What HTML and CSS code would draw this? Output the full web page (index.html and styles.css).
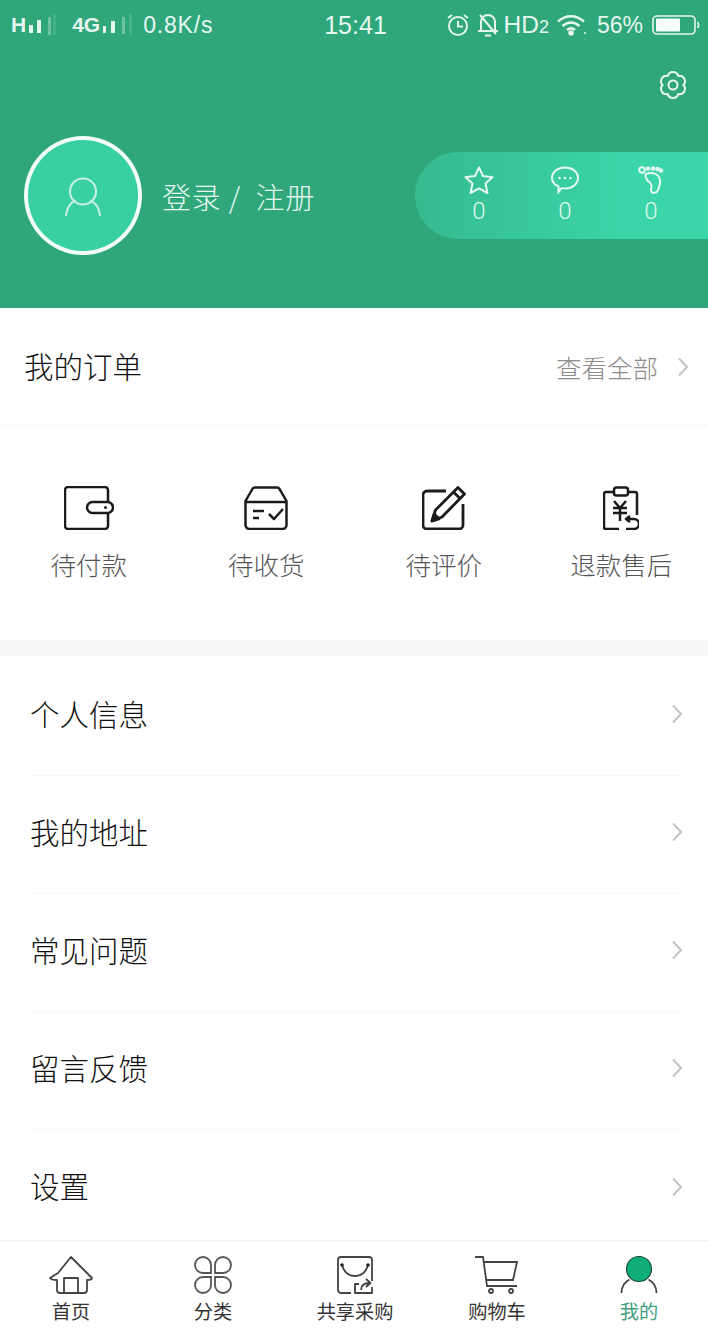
FILE: index.html
```html
<!DOCTYPE html>
<html lang="zh-CN">
<head>
    <meta charset="UTF-8">
    <meta name="viewport" content="width=device-width, initial-scale=1.0">
    <title>我的</title>
    <link rel="stylesheet" href="styles.css">
</head>
<body>
    <div class="page">
        <header class="top">
            <div class="status-bar">
                <div class="status-left">
                    <span class="net">H</span>
                    <svg class="signal" width="44" height="22" viewBox="0 0 44 22"><rect x="1" y="11" width="4" height="8" fill="#e6f7f0"/><rect x="9" y="6" width="4" height="13" fill="#e6f7f0"/><rect x="20" y="3" width="3" height="18" fill="#6cc2a2"/><rect x="25" y="0" width="3" height="21" fill="#53b792" opacity=".6"/></svg>
                    <span class="net">4G</span>
                    <svg class="signal" width="34" height="22" viewBox="0 0 34 22"><rect x="1" y="12" width="3" height="7" fill="#e6f7f0"/><rect x="9" y="7" width="4" height="12" fill="#e6f7f0"/><rect x="20" y="3" width="3" height="17" fill="#6cc2a2"/><rect x="27" y="0" width="3" height="21" fill="#53b792" opacity=".6"/></svg>
                    <span class="speed">0.8K/s</span>
                </div>
                <div class="clock">15:41</div>
                <div class="status-right">
                    <svg width="24" height="24" viewBox="0 0 24 24" fill="none" stroke="#e6f7f0" stroke-width="2"><circle cx="12" cy="13" r="9"/><path d="M12 8v5.500h5M2 5l4-3M22 5l-4-3"/></svg>
                    <svg class="bell" width="22" height="24" viewBox="0 0 22 24" fill="none" stroke="#e6f7f0" stroke-width="2"><path d="M4 18V9a7 7 0 0 1 14 0v9M1 18h20M8 22.500h6M3 2l16 19"/></svg>
                    <span class="hd">HD<small>2</small></span>
                    <svg class="wifi" width="32" height="22" viewBox="0 0 32 22" fill="none" stroke="#e6f7f0" stroke-width="2.500"><path d="M2 7.500c8-7 18-7 26 0M6.500 12c5.500-4.500 11.500-4.500 17 0M11 16c2.500-2 5.500-2 8 0"/><circle cx="15" cy="19" r="1.500" fill="#e6f7f0"/><circle cx="29" cy="19" r="1" fill="#e6f7f0" stroke="none"/></svg>
                    <span class="pct">56%</span>
                    <svg class="battery" width="48" height="22" viewBox="0 0 48 22" fill="none"><rect x="1" y="2" width="42" height="18" rx="4" stroke="#e6f7f0" stroke-width="1.600"/><rect x="4" y="4.500" width="24" height="13" rx="1" fill="#f6fdfa"/><path d="M45.500 8c1.500 2 1.500 4 0 6" stroke="#e6f7f0" stroke-width="1.600"/></svg>
                </div>
            </div>
            <div class="settings-row">
                <svg width="30" height="30" viewBox="0 0 30 30" fill="none" stroke="#e6f7f0" stroke-width="2"><path d="M25.500 15A5.500 5.500 0 0 1 20.250 24.090A5.500 5.500 0 0 1 9.750 24.090A5.500 5.500 0 0 1 4.500 15A5.500 5.500 0 0 1 9.750 5.910A5.500 5.500 0 0 1 20.250 5.910A5.500 5.500 0 0 1 25.500 15Z"/><circle cx="15" cy="15" r="4.500"/></svg>
            </div>
            <div class="profile">
                <div class="avatar">
                    <svg width="36" height="40" viewBox="0 0 36 40" fill="none" stroke="#c2f0df" stroke-width="2.200" stroke-linecap="round"><circle cx="18" cy="14.500" r="13"/><path d="M1 38c1-7 4-12 9-14M35 38c-1-7-4-12-9-14"/></svg>
                </div>
                <div class="login">登录 /&nbsp; 注册</div>
                <div class="stats">
                    <div class="stat">
                        <svg width="30" height="28" viewBox="0 0 30 28" fill="none" stroke="#e6f9f2" stroke-width="2" stroke-linejoin="round"><path d="M15 1.500l4 8.500 9.500 1.200-7 6.300 2 9.500-8.500-4.700-8.500 4.700 2-9.500-7-6.300 9.500-1.200z"/></svg>
                        <span>0</span>
                    </div>
                    <div class="stat">
                        <svg width="28" height="28" viewBox="0 0 28 28" fill="none" stroke="#e6f9f2" stroke-width="2"><path d="M14 1.500c7.300 0 13 4.700 13 10.500s-5.700 10.500-13 10.500c-1.200 0-2.300-.1-3.400-.4L7.500 26v-5.500C3.500 18.700 1 15.600 1 12 1 6.200 6.700 1.500 14 1.500z"/><circle cx="8.500" cy="12" r="1.300" fill="#e6f9f2" stroke="none"/><circle cx="14" cy="12" r="1.300" fill="#e6f9f2" stroke="none"/><circle cx="19.500" cy="12" r="1.300" fill="#e6f9f2" stroke="none"/></svg>
                        <span>0</span>
                    </div>
                    <div class="stat">
                        <svg width="26" height="28" viewBox="0 0 26 28" fill="none" stroke="#e6f9f2" stroke-width="2"><circle cx="4" cy="4" r="2.800"/><circle cx="10" cy="2.500" r="1.300"/><circle cx="15" cy="2.500" r="1.300"/><circle cx="19.500" cy="3" r="1.300"/><circle cx="23" cy="4.500" r="1.300"/><path d="M8 8c5-2 13-1 14 6 .6 4-1 7-2 10-1 3-6 4-7 1-.6-2 1-3 .5-5.500C13 16 10 16 8.500 13 7.500 11 7 9 8 8z"/></svg>
                        <span>0</span>
                    </div>
                </div>
            </div>
        </header>

        <section class="orders">
            <div class="orders-head">
                <span class="orders-title">我的订单</span>
                <span class="orders-all">查看全部</span>
                <svg class="chevron" width="10" height="20" viewBox="0 0 10 20" fill="none" stroke="#c4c4c4" stroke-width="2"><path d="M1 1.500l8 8.500-8 8.500"/></svg>
            </div>
            <div class="orders-grid">
                <div class="order-item">
                    <svg width="50" height="44" viewBox="0 0 50 44" fill="none" stroke="#1b1b1b" stroke-width="2.500" stroke-linejoin="round"><path d="M44 15V4a3 3 0 0 0-3-3H4a3 3 0 0 0-3 3v36a3 3 0 0 0 3 3h37a3 3 0 0 0 3-3V28"/><rect x="23" y="16" width="26" height="11" rx="5.500"/><circle cx="41.500" cy="21.500" r="1.500" fill="#1b1b1b" stroke="none"/></svg>
                    <span>待付款</span>
                </div>
                <div class="order-item">
                    <svg width="44" height="44" viewBox="0 0 44 44" fill="none" stroke="#1b1b1b" stroke-width="2.500" stroke-linejoin="round"><path d="M11 1.500h22a3 3 0 0 1 2.600 1.500L42.500 15v24a4 4 0 0 1-4 4h-33a4 4 0 0 1-4-4V15L8.400 3A3 3 0 0 1 11 1.500zM1.500 16h41"/><path d="M9 25h11M9 32h6M25 28l5 5 9-10"/></svg>
                    <span>待收货</span>
                </div>
                <div class="order-item">
                    <svg width="44" height="44" viewBox="0 0 44 44" fill="none" stroke="#1b1b1b" stroke-width="2.800" stroke-linejoin="round"><path d="M24 5H5a4 4 0 0 0-4 4v30a4 4 0 0 0 4 4h32a4 4 0 0 0 4-4V18"/><path d="M10 35l3.500-11L36 1.500l6.500 6.500L20 31z"/><path d="M31.500 6l6.500 6.500"/><path d="M10 35l7-2.200-4.800-4.800z" fill="#1b1b1b"/></svg>
                    <span>待评价</span>
                </div>
                <div class="order-item">
                    <svg width="36" height="44" viewBox="0 0 36 44" fill="none" stroke="#1b1b1b" stroke-width="2.500" stroke-linejoin="round"><path d="M10 6H3a2 2 0 0 0-2 2v33a2 2 0 0 0 2 2h13M26 6h6a2 2 0 0 1 2 2v21"/><rect x="11" y="1.500" width="14" height="8" rx="2.500"/><path d="M11 15l6 7 6-7M10 22h14M10 27h14M17 22v13"/><path d="M27 30l-4 3 4 3M23 33h8a4 4 0 0 1 0 10h-8"/></svg>
                    <span>退款售后</span>
                </div>
            </div>
        </section>

        <div class="band"></div>

        <ul class="menu">
            <li>个人信息<svg width="10" height="20" viewBox="0 0 10 20" fill="none" stroke="#c4c4c4" stroke-width="2"><path d="M1 1.500l8 8.500-8 8.500"/></svg></li>
            <li>我的地址<svg width="10" height="20" viewBox="0 0 10 20" fill="none" stroke="#c4c4c4" stroke-width="2"><path d="M1 1.500l8 8.500-8 8.500"/></svg></li>
            <li>常见问题<svg width="10" height="20" viewBox="0 0 10 20" fill="none" stroke="#c4c4c4" stroke-width="2"><path d="M1 1.500l8 8.500-8 8.500"/></svg></li>
            <li>留言反馈<svg width="10" height="20" viewBox="0 0 10 20" fill="none" stroke="#c4c4c4" stroke-width="2"><path d="M1 1.500l8 8.500-8 8.500"/></svg></li>
            <li>设置<svg width="10" height="20" viewBox="0 0 10 20" fill="none" stroke="#c4c4c4" stroke-width="2"><path d="M1 1.500l8 8.500-8 8.500"/></svg></li>
        </ul>

        <nav class="tabs">
            <div class="tab">
                <svg width="44" height="38" viewBox="0 0 44 38" fill="none" stroke="#444" stroke-width="1.800" stroke-linejoin="round"><path d="M9 17L22 1l14 14 7 7c0 1.500-2 2-5 2v10a3 3 0 0 1-3 3H11a3 3 0 0 1-3-3V24c-3 0-6-.5-7-2z"/><path d="M15 37V22h14v15"/></svg>
                <span>首页</span>
            </div>
            <div class="tab">
                <svg width="38" height="38" viewBox="0 0 38 38" fill="none" stroke="#555" stroke-width="1.800"><path d="M17 17H9a8 8 0 1 1 8-8z"/><path d="M21 17h8a8 8 0 1 0-8-8z"/><path d="M17 21H9a8 8 0 1 0 8 8z"/><path d="M21 21h8a8 8 0 1 1-8 8z"/></svg>
                <span>分类</span>
            </div>
            <div class="tab">
                <svg width="36" height="38" viewBox="0 0 36 38" fill="none" stroke="#444" stroke-width="1.800" stroke-linejoin="round"><path d="M14 37H4a3 3 0 0 1-3-3V4a3 3 0 0 1 3-3h28a3 3 0 0 1 3 3v21"/><path d="M5 9c2 7 7 11 13 11s11-4 13-11"/><circle cx="5" cy="9" r="1.800" fill="#222" stroke="none"/><circle cx="31" cy="9" r="1.800" fill="#222" stroke="none"/><path d="M22 28h-4v9h17v-6M24 34c0-5 3-7 9-7M29 23l4.500 4-4.500 4"/></svg>
                <span>共享采购</span>
            </div>
            <div class="tab">
                <svg width="44" height="38" viewBox="0 0 44 38" fill="none" stroke="#444" stroke-width="1.800"><path d="M0 1h8l4 29h30"/><path d="M9 6h33l-4 18H12"/><circle cx="16" cy="35" r="2"/><circle cx="36" cy="35" r="2"/></svg>
                <span>购物车</span>
            </div>
            <div class="tab active">
                <svg width="38" height="38" viewBox="0 0 38 38" fill="none"><circle cx="19" cy="13" r="12.500" fill="#0fae78" stroke="#1d4d3d" stroke-width="1.200"/><path d="M1.500 37c0-6 3-11 8-13.500M36.500 37c0-6-3-11-8-13.500" stroke="#444" stroke-width="1.800"/></svg>
                <span>我的</span>
            </div>
        </nav>
    </div>
</body>
</html>
```

FILE: styles.css
```css
/* Basic styling */
* { box-sizing: border-box; margin: 0; padding: 0; }
body { font-family: "Noto Sans CJK SC", "Liberation Sans", sans-serif; background-color: #fff; color: #222; }
svg { display: block; flex: none; }
.page { width: 708px; height: 1334px; overflow: hidden; display: flex; flex-direction: column; }

/* Green header */
.top { height: 308px; flex: none; background-color: #2fa77b; color: #e6f7f0; }
.status-bar { height: 50px; padding: 0 8px 0 11px; display: grid; grid-template-columns: 1fr auto 1fr; align-items: center; font-family: "Liberation Sans", sans-serif; font-size: 23px; }
.status-left, .status-right { display: flex; align-items: center; }
.status-left .signal { margin-left: 2px; }
.status-left .net { font-weight: 700; font-size: 21px; }
.status-left .speed { margin-left: 7px; letter-spacing: .8px; }
.clock { font-size: 25px; }
.status-right { justify-content: flex-end; }
.status-right .bell { margin-left: 7px; }
.hd { margin-left: 5px; font-size: 24.500px; }
.hd small { font-size: 18px; }
.wifi { margin-left: 7px; }
.pct { margin-left: 9px; }
.battery { margin-left: 9px; }
.settings-row { display: flex; justify-content: flex-end; padding: 20px 20px 0 0; height: 70px; }
.profile { display: flex; align-items: center; height: 119px; padding-left: 24px; margin-top: 16px; }
.avatar { width: 118px; height: 119px; border-radius: 50%; background-color: #38cfa3; border: 4px solid #f1fbf7; display: flex; align-items: center; justify-content: center; padding-top: 3px; }
.login { margin-left: 20px; font-size: 29px; font-weight: 300; letter-spacing: .8px; }
.stats { margin-left: auto; width: 293px; height: 87px; border-radius: 44px 0 0 44px; background: linear-gradient(to right, #36ba90, #3ad6a9 75%); display: grid; grid-template-columns: repeat(3, 86px); padding-left: 21px; }
.stat { display: flex; flex-direction: column; align-items: center; padding-top: 14px; font-family: Roboto, "Liberation Sans", sans-serif; font-size: 24px; font-weight: 300; line-height: 30px; color: #dff7ee; }
.stat span { margin-top: 2px; }

/* Orders */
.orders { flex: none; }
.orders-head { height: 118px; padding: 0 20px 3px 24px; display: flex; align-items: center; border-bottom: 1px solid #f7f7f7; }
.orders-title { font-size: 29.500px; font-weight: 300; color: #111; }
.orders-all { margin-left: auto; margin-top: 2px; font-size: 25.500px; font-weight: 300; color: #8c8c8c; }
.chevron { margin-left: 20px; margin-top: 3px; }
.orders-grid { height: 214px; display: grid; grid-template-columns: repeat(4, 177.500px); }
.order-item { display: flex; flex-direction: column; align-items: center; padding-top: 60px; font-size: 25.500px; font-weight: 300; color: #555; }
.order-item svg { height: 44px; }
.order-item span { margin-top: 16px; line-height: 36px; }
.band { height: 16px; flex: none; background-color: #f8f8f8; }

/* Menu */
.menu { list-style: none; flex: 1; overflow: hidden; padding-top: 2px; }
.menu li { height: 118px; margin: 0 26px 0 30px; padding-bottom: 8px; display: flex; align-items: center; justify-content: space-between; font-size: 29.500px; font-weight: 300; color: #111; border-bottom: 1px solid #f8f8f8; }
.menu li svg { margin-top: 3px; }
.menu li:last-child { border-bottom: none; }

/* Bottom tabs */
.tabs { height: 94px; flex: none; display: grid; grid-template-columns: repeat(5, 142px); border-top: 2px solid #f6f6f6; }
.tab { display: flex; flex-direction: column; align-items: center; padding-top: 14px; font-size: 19.200px; color: #333; }
.tab span { line-height: 30px; margin-top: 2px; }
.tab.active { color: #3f9f80; }
```
